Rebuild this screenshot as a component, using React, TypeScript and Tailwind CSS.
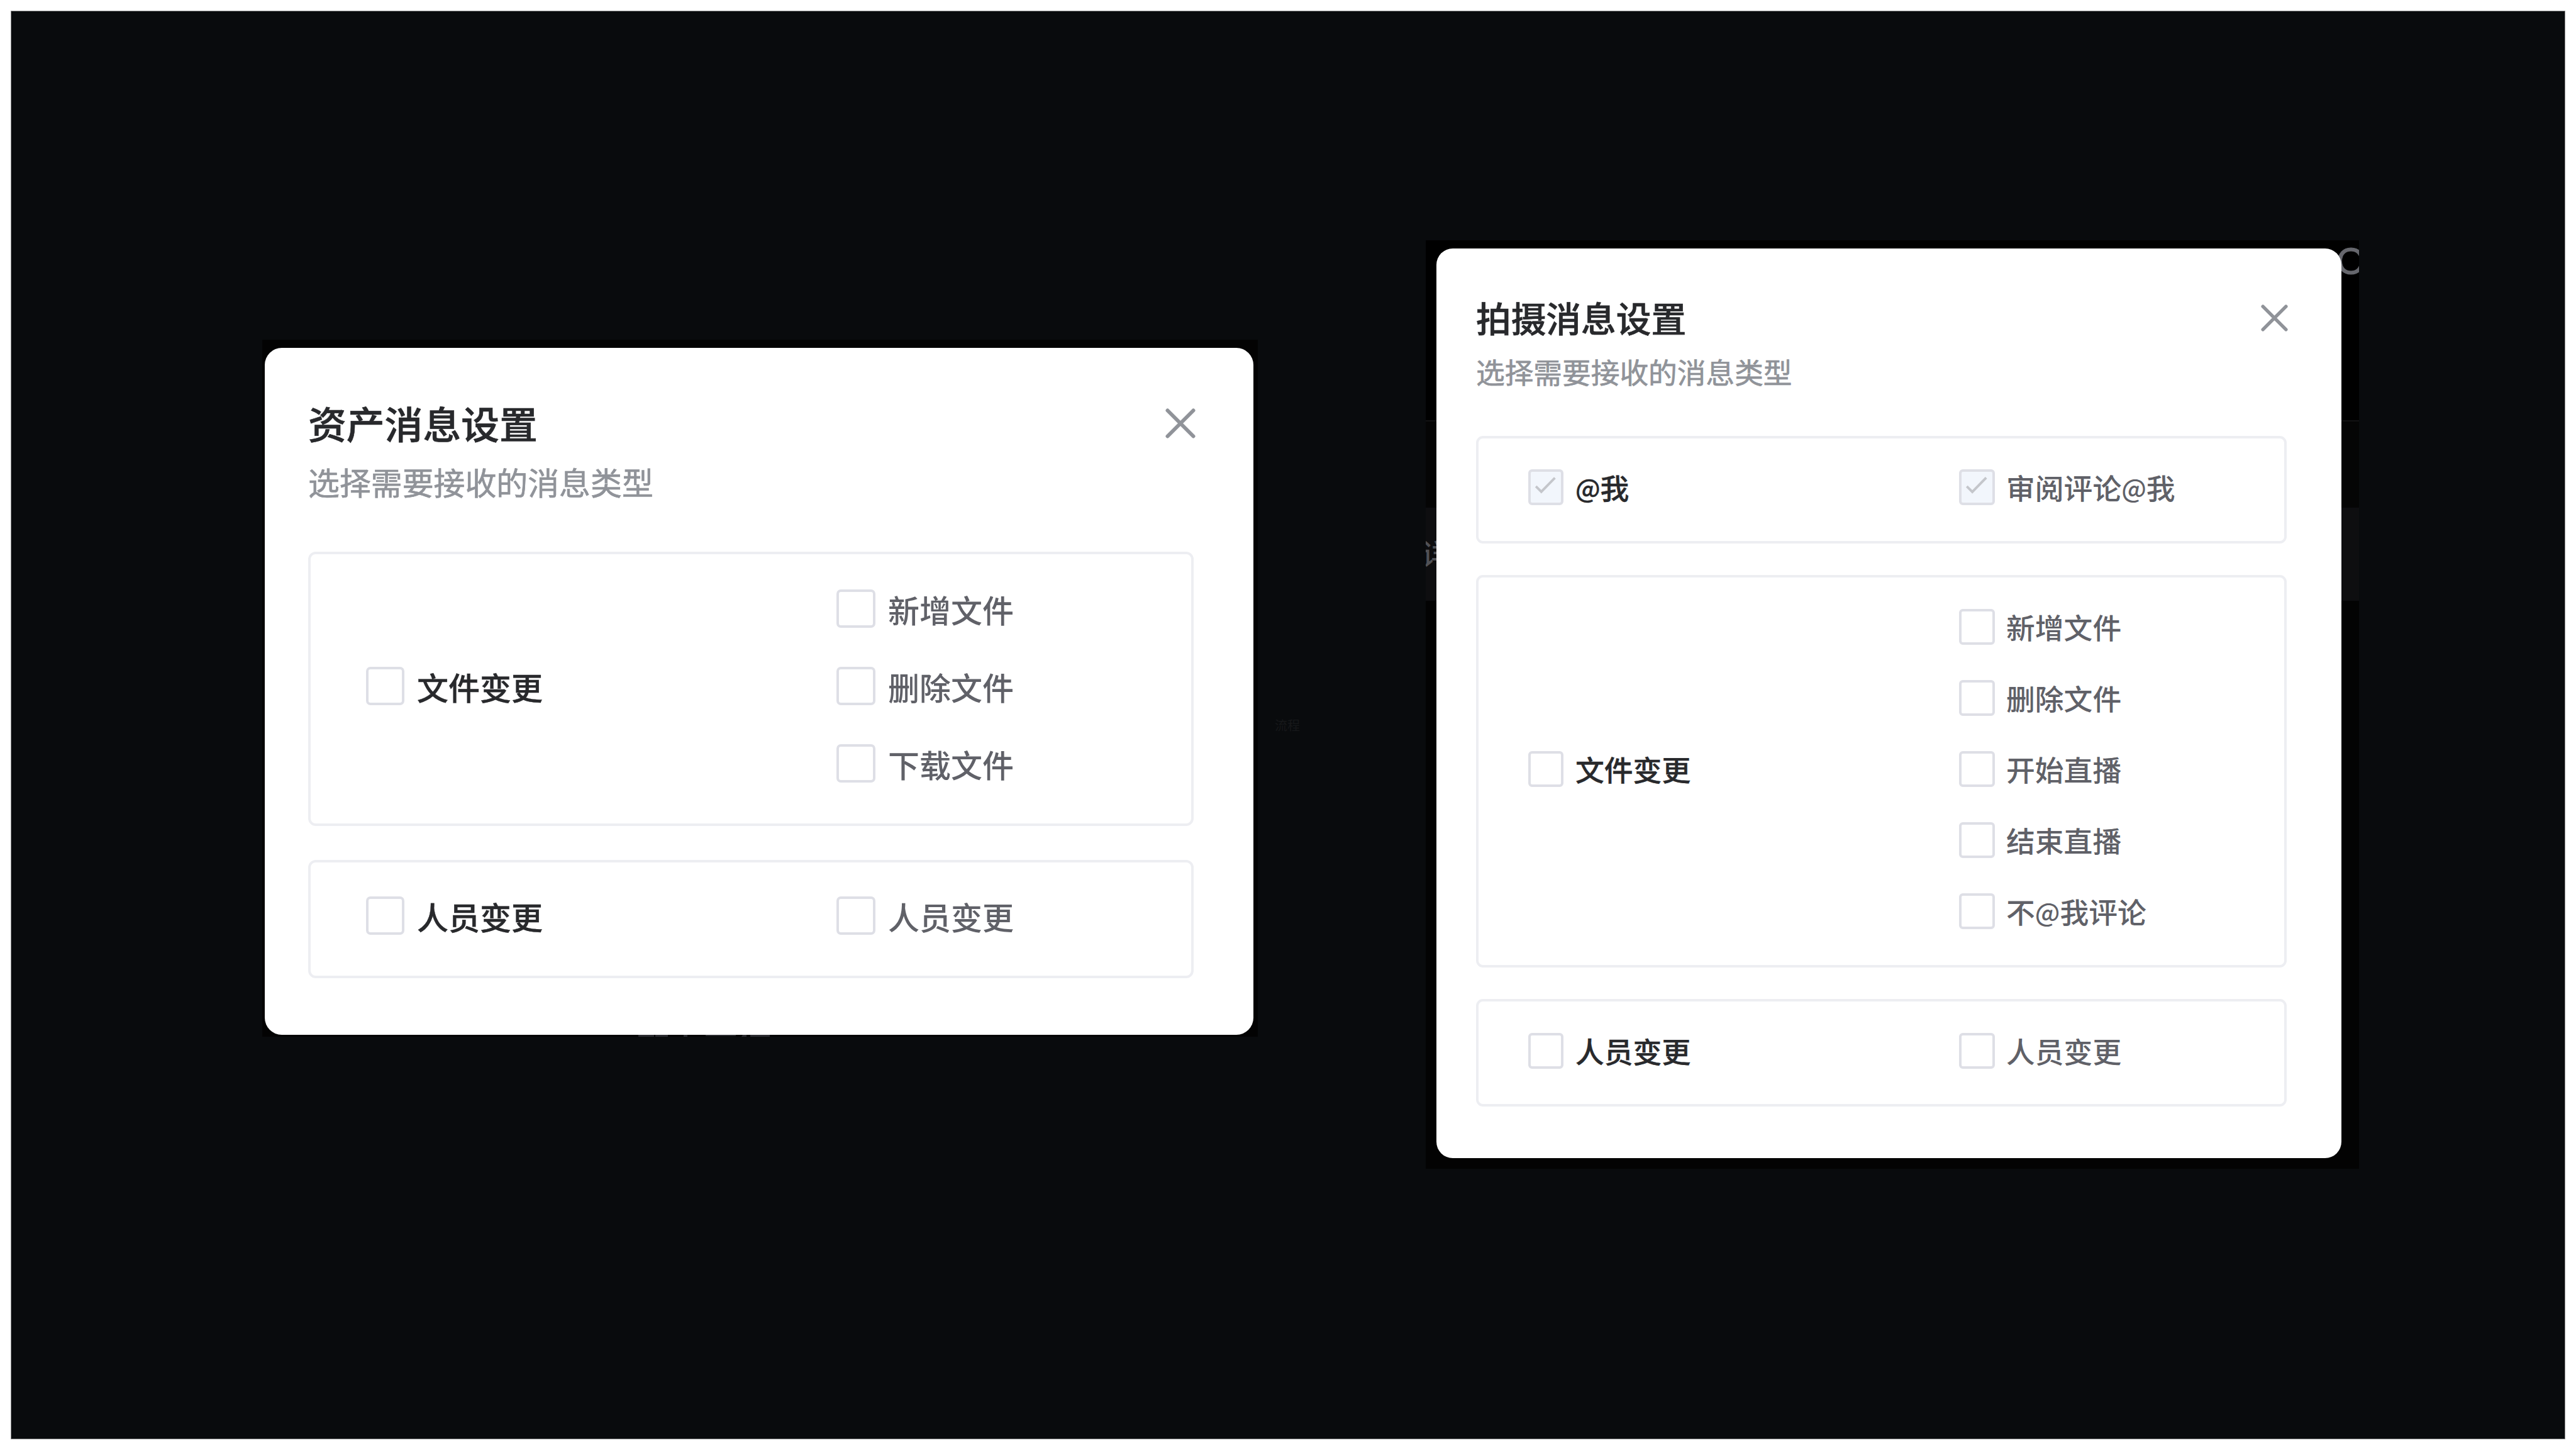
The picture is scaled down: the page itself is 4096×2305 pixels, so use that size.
import clsx from "clsx";

type Size = "lg" | "md";

interface Group {
  label: string;
  options: string[];
  disabled?: boolean;
  className: string;
}

const assetGroups: Group[] = [
  { label: "文件变更", options: ["新增文件", "删除文件", "下载文件"], className: "h-[436px] pt-[56px]" },
  { label: "人员变更", options: ["人员变更"], className: "h-[188px] pt-[54px]" },
];

const shootGroups: Group[] = [
  { label: "@我", options: ["审阅评论@我"], disabled: true, className: "h-[171px] pt-[49px]" },
  {
    label: "文件变更",
    options: ["新增文件", "删除文件", "开始直播", "结束直播", "不@我评论"],
    className: "h-[624px] pt-[50px]",
  },
  { label: "人员变更", options: ["人员变更"], className: "h-[171px] pt-[50px]" },
];

// the @ sign sits a bit smaller than the characters around it
function LabelText({ text }: { text: string }) {
  const [before, after] = text.split("@");

  if (after === undefined) return <>{text}</>;

  return (
    <>
      {before}
      <span className="relative -top-[2px] text-[0.89em]">@</span>
      {after}
    </>
  );
}

function CheckItem({ label, size, strong, checked }: { label: string; size: Size; strong?: boolean; checked?: boolean }) {
  return (
    <label
      className={clsx(
        "flex items-center whitespace-nowrap font-medium",
        size === "lg" ? "h-[61px] text-[50px]" : "h-[57px] text-[45.8px]",
        size === "lg" ? "gap-[20px]" : strong ? "gap-[19px]" : "gap-[18px]",
        strong ? "text-[#28292c] [-webkit-text-stroke:0.4px_#28292c]" : "text-[#606168]"
      )}
    >
      <span
        className={clsx(
          "block shrink-0 border-4 border-[#dedfe6]",
          size === "lg" ? "h-[61px] rounded-[7px]" : "h-[57px] rounded-[6px]",
          size === "lg" ? (strong ? "w-[61px]" : "w-[62px]") : strong ? "w-[56px]" : "w-[57px]",
          checked ? "bg-[#f2f6fc]" : "bg-white"
        )}
      >
        {checked && (
          <svg className="block size-full" viewBox="0 0 50 50" fill="none" stroke="#c4c6cb" strokeWidth="4">
            <path d="M8.5 23.5 L17.5 32.5 L40 9.5" />
          </svg>
        )}
      </span>
      <span className={clsx("leading-none", size === "md" && "pt-[1px]")}>
        <LabelText text={label} />
      </span>
    </label>
  );
}

function SettingGroup({ group, size }: { group: Group; size: Size }) {
  return (
    <section
      className={clsx(
        "grid items-start border-4 border-[#edeef2]",
        size === "lg"
          ? "rounded-[12px] grid-cols-[748px_1fr] pl-[88px]"
          : "rounded-[11px] grid-cols-[685px_1fr] pl-[79px]",
        group.className
      )}
    >
      <div
        className={clsx(
          group.options.length === 3 && "pt-[123px]",
          group.options.length === 5 && "pt-[226px]"
        )}
      >
        <CheckItem label={group.label} size={size} strong checked={group.disabled} />
      </div>
      <div className={clsx("flex flex-col", size === "lg" ? "gap-[62px]" : "gap-[56px]")}>
        {group.options.map((option) => (
          <CheckItem key={option} label={option} size={size} checked={group.disabled} />
        ))}
      </div>
    </section>
  );
}

function CloseIcon({ className }: { className: string }) {
  return (
    <svg className={className} viewBox="0 0 48 48" fill="none" stroke="#909399" strokeWidth="6" strokeLinecap="round">
      <path d="M3.5 3.5 L44.5 44.5 M44.5 3.5 L3.5 44.5" />
    </svg>
  );
}

function AssetDialog() {
  return (
    <div className="relative ml-[399px] mt-[522px] h-[1108px] w-[1583px] shrink-0 bg-[#030303] pl-[4px] pt-[13px]">
      {/* bottom edge of the page text behind the dialog */}
      <svg className="absolute left-[598px] bottom-0 h-[3px] w-[210px]" viewBox="0 0 210 3" fill="#2b2c30">
        <path d="M0 0h25v3H0z M27 0h20v3H27z M72 0h6v3H72z M107 0h48v2H107z M166 0h6v3H164z M178 0h31v3H178z" />
      </svg>
      <div className="relative h-[1092px] w-[1572px] rounded-[27px] bg-white pl-[69px] pt-[79px]">
        <header className="flex h-[245px] items-start">
          <div className="w-[1363px]">
            <h1 className="text-[60.8px] leading-[80px] font-medium text-[#28292c] [-webkit-text-stroke:0.7px_#28292c]">
              资产消息设置
            </h1>
            <p className="mt-[18px] text-[49.9px] leading-[70px] text-[#909399] [-webkit-text-stroke:0.7px_#909399]">
              选择需要接收的消息类型
            </p>
          </div>
          <CloseIcon className="mt-[17px] size-[48px]" />
        </header>
        <div className="flex w-[1408px] flex-col gap-[54px]">
          {assetGroups.map((group) => (
            <SettingGroup key={group.label} group={group} size="lg" />
          ))}
        </div>
      </div>
    </div>
  );
}

function ShootDialog() {
  return (
    <div className="relative ml-[200px] mt-[364px] h-[1476px] w-[1484px] shrink-0 overflow-hidden pl-[16.5px] pt-[13px]">
      {/* dimmed page under the dialog */}
      <div className="absolute inset-0 flex flex-col">
        <div className="flex h-[286px] justify-end bg-black">
          <span className="-mt-[6px] h-[75px] w-[36px] overflow-hidden font-['Lato'] text-[58px] leading-[75px] text-[#66676d] [-webkit-text-stroke:1px_#66676d]">
            O
          </span>
        </div>
        <div className="h-[2px] bg-[#121213]" />
        <div className="h-[137px] bg-[#050505]" />
        <div className="h-[148px] bg-[#0e0e10]">
          <span className="ml-[-7px] block pt-[46px] text-[45.8px] leading-[50px] font-medium text-[#505156]">详</span>
        </div>
        <div className="flex-1 bg-[#030303]" />
      </div>
      <div className="relative h-[1446px] w-[1439px] rounded-[26px] bg-white pl-[63.5px] pt-[69px]">
        <header className="flex h-[229px] items-start">
          <div className="w-[1248px]">
            <h1 className="text-[55.7px] leading-[80px] font-medium text-[#28292c] [-webkit-text-stroke:0.7px_#28292c]">
              拍摄消息设置
            </h1>
            <p className="mt-[11px] text-[45.7px] leading-[70px] text-[#909399] [-webkit-text-stroke:0.7px_#909399]">
              选择需要接收的消息类型
            </p>
          </div>
          <CloseIcon className="mt-[20px] size-[43px]" />
        </header>
        <div className="flex w-[1289px] flex-col gap-[50px]">
          {shootGroups.map((group) => (
            <SettingGroup key={group.label} group={group} size="md" />
          ))}
        </div>
      </div>
    </div>
  );
}

function App() {
  return (
    <div className="h-[2305px] w-[4096px] overflow-hidden bg-white p-[17px] font-['Noto_Sans_CJK_SC',sans-serif]">
      <main className="flex h-full w-full items-start border border-[#8c8c8c] bg-[#090b0d]">
        <AssetDialog />
        <span className="ml-[27px] mt-[1123px] w-[40px] text-[20px] leading-[24px] text-[#17181a]">流程</span>
        <ShootDialog />
      </main>
    </div>
  );
}

export default App;
